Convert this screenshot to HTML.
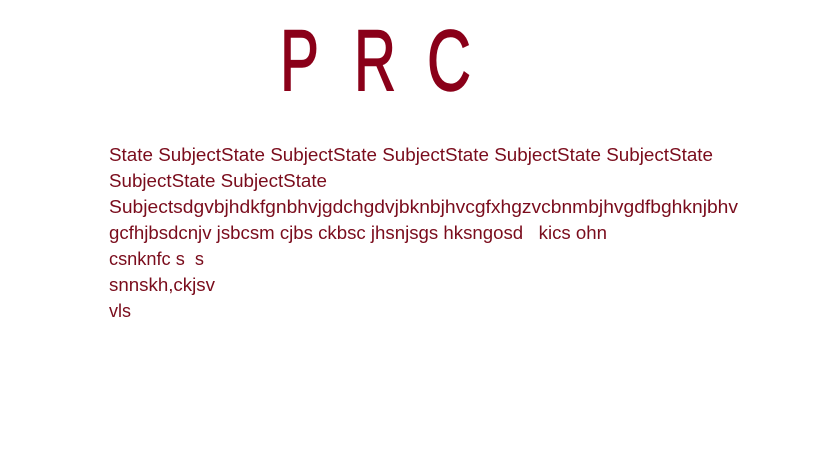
<!DOCTYPE html>
<html><head><meta charset="utf-8"><style>
html,body{margin:0;padding:0;background:#fff;width:819px;height:460px;overflow:hidden}
svg{display:block}
text{font-family:"Liberation Sans",sans-serif}
</style></head><body>
<svg width="819" height="460" viewBox="0 0 819 460" xmlns="http://www.w3.org/2000/svg">
<g fill="#8a0019" stroke="#8a0019" stroke-width="1.5" font-size="86">
<text x="280" y="90" textLength="39" lengthAdjust="spacingAndGlyphs">P</text>
<text x="354" y="90" textLength="42" lengthAdjust="spacingAndGlyphs">R</text>
<text x="427" y="90" textLength="44" lengthAdjust="spacingAndGlyphs">C</text>
</g>
<g fill="#7a0c1c" font-size="18">
<text x="109" y="161" textLength="604" lengthAdjust="spacingAndGlyphs">State SubjectState SubjectState SubjectState SubjectState SubjectState</text>
<text x="109" y="187" textLength="218" lengthAdjust="spacingAndGlyphs">SubjectState SubjectState</text>
<text x="109" y="213" textLength="629" lengthAdjust="spacingAndGlyphs">Subjectsdgvbjhdkfgnbhvjgdchgdvjbknbjhvcgfxhgzvcbnmbjhvgdfbghknjbhv</text>
<text x="109" y="239" textLength="498" lengthAdjust="spacingAndGlyphs" xml:space="preserve">gcfhjbsdcnjv jsbcsm cjbs ckbsc jhsnjsgs hksngosd   kics ohn</text>
<text x="109" y="265" textLength="95" lengthAdjust="spacingAndGlyphs" xml:space="preserve">csnknfc s  s</text>
<text x="109" y="291" textLength="106" lengthAdjust="spacingAndGlyphs">snnskh,ckjsv</text>
<text x="109" y="317" textLength="22" lengthAdjust="spacingAndGlyphs">vls</text>
</g>
</svg>
</body></html>
